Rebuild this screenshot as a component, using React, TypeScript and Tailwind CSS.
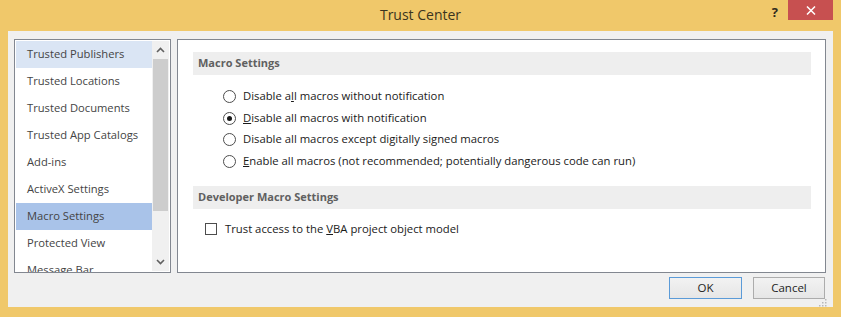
import * as React from 'react';

const FONT = { fontFamily: '"Open Sans", "Noto Sans", sans-serif' };

const navItems = [
  'Trusted Publishers',
  'Trusted Locations',
  'Trusted Documents',
  'Trusted App Catalogs',
  'Add-ins',
  'ActiveX Settings',
  'Macro Settings',
  'Protected View',
  'Message Bar',
];

function Radio({ checked, children }: { checked?: boolean; children: React.ReactNode }) {
  return (
    <div className="flex h-[21.5px] items-center pl-[30px]">
      <span className="flex h-[13px] w-[13px] items-center justify-center rounded-full border border-[#4d4d4d] bg-white">
        {checked && <span className="h-[5px] w-[5px] rounded-full bg-[#1a1a1a]" />}
      </span>
      <span className="ml-[7px] text-[11.3px] text-[#1a1a1a]">{children}</span>
    </div>
  );
}

function SectionHeader({ children }: { children: React.ReactNode }) {
  return (
    <div className="flex h-[23px] items-center bg-[#eeeeee] pl-[5px] text-[11px] font-bold text-[#606060]">
      {children}
    </div>
  );
}

function ScrollBar() {
  return (
    <div className="flex w-[17px] flex-col bg-[#f0f0f0]">
      <div className="flex h-[18px] items-center justify-center">
        <svg width="9" height="6" viewBox="0 0 9 6">
          <path d="M1 5 L4.5 1.5 L8 5" fill="none" stroke="#606060" strokeWidth="1.6" />
        </svg>
      </div>
      <div className="mx-[1px] h-[152px] bg-[#cdcdcd]" />
      <div className="flex-1" />
      <div className="flex h-[18px] items-center justify-center">
        <svg width="9" height="6" viewBox="0 0 9 6">
          <path d="M1 1 L4.5 4.5 L8 1" fill="none" stroke="#606060" strokeWidth="1.6" />
        </svg>
      </div>
    </div>
  );
}

export default function App() {
  return (
    <div className="flex h-[317px] w-[841px] flex-col overflow-hidden bg-[#f0c86a] px-[8px] pb-[10px]" style={FONT}>
      {/* title bar */}
      <div className="flex h-[31px] items-start">
        <div className="flex-1" />
        <div className="pt-[4px] text-[14px] text-[#3a3420]">Trust Center</div>
        <div className="flex flex-1 justify-end">
          <span className="mr-[10px] mt-[3px] text-[13px] font-bold text-[#2f2a1c]">?</span>
          <div className="flex h-[20px] w-[45px] items-center justify-center bg-[#c75050]">
            <svg width="10" height="9" viewBox="0 0 10 9">
              <path d="M1 0.5 L9 8.5 M9 0.5 L1 8.5" stroke="white" strokeWidth="1.5" />
            </svg>
          </div>
        </div>
      </div>

      {/* client area */}
      <div className="flex flex-1 flex-col bg-[#f0f0f0] px-[6px] pt-[8px]">
        <div className="flex h-[234px] gap-[6px] pr-[1px]">
          {/* nav list */}
          <div className="flex w-[157px] overflow-hidden border border-[#828790] bg-white p-[1px]">
            <div className="flex flex-1 flex-col">
              {navItems.map((item, i) => (
                <div
                  key={item}
                  className={
                    'flex h-[27px] shrink-0 items-center pl-[11px] text-[11.2px] text-[#444444] ' +
                    (i === 0 ? 'bg-[#dae5f4]' : i === 6 ? 'bg-[#a9c3e9]' : '')
                  }
                >
                  {item}
                </div>
              ))}
            </div>
            <ScrollBar />
          </div>

          {/* settings panel */}
          <div className="flex-1 border border-[#828790] bg-white pl-[15px] pr-[14px] pt-[12px]">
            <SectionHeader>Macro Settings</SectionHeader>
            <div className="pt-[11px]">
              <Radio>
                Disable a<u>l</u>l macros without notification
              </Radio>
              <Radio checked>
                <u>D</u>isable all macros with notification
              </Radio>
              <Radio>
                Disable all macros except di<u>g</u>itally signed macros
              </Radio>
              <Radio>
                <u>E</u>nable all macros (not recommended; potentially dangerous code can run)
              </Radio>
            </div>
            <div className="mt-[14px]">
              <SectionHeader>Developer Macro Settings</SectionHeader>
            </div>
            <div className="flex h-[40px] items-center pl-[12px]">
              <span className="h-[12px] w-[12px] border border-[#4d4d4d] bg-white" />
              <span className="ml-[8px] text-[11.3px] text-[#1a1a1a]">
                Trust access to the <u>V</u>BA project object model
              </span>
            </div>
          </div>
        </div>

        {/* buttons */}
        <div className="flex items-end justify-end gap-[11px] pr-[2px] pt-[4px]">
          <button className="h-[22px] w-[73px] border border-[#5b9bd8] bg-gradient-to-b from-[#f2f2f2] to-[#e6e6e6] text-[11.5px] text-[#1e1e1e]">
            OK
          </button>
          <button className="h-[22px] w-[72px] border border-[#acacac] bg-gradient-to-b from-[#f2f2f2] to-[#e6e6e6] text-[11.5px] text-[#1e1e1e]">
            Cancel
          </button>
        </div>
        <div className="flex flex-1 items-end justify-end">
          <svg width="8" height="8" viewBox="0 0 8 8">
            <rect x="6" y="0" width="1.5" height="1.5" fill="#b8b8b8" />
            <rect x="3" y="3" width="1.5" height="1.5" fill="#b8b8b8" />
            <rect x="6" y="3" width="1.5" height="1.5" fill="#b8b8b8" />
            <rect x="0" y="6" width="1.5" height="1.5" fill="#b8b8b8" />
            <rect x="3" y="6" width="1.5" height="1.5" fill="#b8b8b8" />
            <rect x="6" y="6" width="1.5" height="1.5" fill="#b8b8b8" />
          </svg>
        </div>
      </div>
    </div>
  );
}
